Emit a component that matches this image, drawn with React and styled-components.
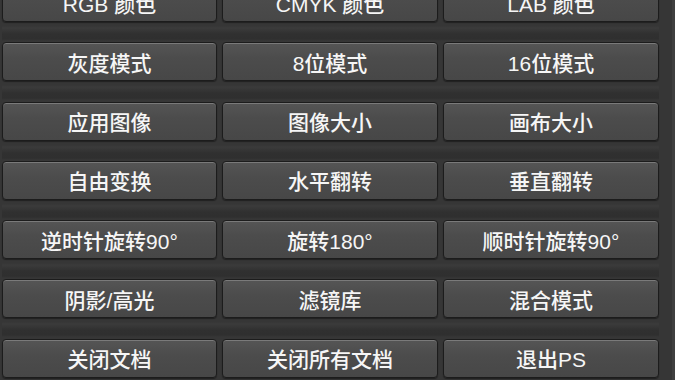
import React from "react";
import styled, { createGlobalStyle } from "styled-components";

const rows = [
    ["RGB 颜色", "CMYK 颜色", "LAB 颜色"],
    ["灰度模式", "8位模式", "16位模式"],
    ["应用图像", "图像大小", "画布大小"],
    ["自由变换", "水平翻转", "垂直翻转"],
    ["逆时针旋转90°", "旋转180°", "顺时针旋转90°"],
    ["阴影/高光", "滤镜库", "混合模式"],
    ["关闭文档", "关闭所有文档", "退出PS"],
];

function App() {
    return (
        <>
            <GlobalStyle />
            <Panel>
                <List>
                    {rows.map((row, i) => (
                        <Row key={i}>
                            {row.map((label) => (
                                <ActionButton key={label}>{label}</ActionButton>
                            ))}
                        </Row>
                    ))}
                </List>
                <ScrollTrack />
            </Panel>
        </>
    );
}

const GlobalStyle = createGlobalStyle`
    html, body {
        margin: 0;
        padding: 0;
        background: #363636;
        overflow: hidden;
    }
`;

const Panel = styled.div`
    display: flex;
    align-items: flex-start;
    width: 675px;
    height: 380px;
    overflow: hidden;
    background: #363636;
`;

const List = styled.div`
    flex: 1;
    display: flex;
    flex-direction: column;
    margin-top: -18px;
    padding: 0 13px 0 2px;
`;

const Row = styled.div`
    flex-shrink: 0;
    display: grid;
    grid-template-columns: 215px 216px 216px;
    column-gap: 5px;
    height: 59.3px;
    padding-top: 1px;
    box-sizing: border-box;
    background: linear-gradient(
        to bottom,
        #363636 0,
        #363636 44px,
        #3b3b3b 46px,
        #303030 52px,
        #2f2f2f 57px,
        #363636 59px
    );
`;

const ActionButton = styled.button`
    height: 39px;
    margin: 0;
    padding: 3px 0 0;
    border: 1px solid #1c1c1c;
    border-radius: 4px;
    background: linear-gradient(to bottom, #555555 0, #4c4c4c 40%, #474747 100%);
    box-shadow: inset 0 1px 0 #7a7a7a, 0 1px 1px rgba(0, 0, 0, 0.4);
    color: #f6f6f6;
    font-family: "Liberation Sans", "Noto Sans CJK SC", sans-serif;
    font-size: 21px;
    font-weight: 500;
    line-height: 1;
    cursor: pointer;
`;

const ScrollTrack = styled.div`
    align-self: stretch;
    width: 3px;
    background: #3f3f3f;
`;

export default App;
